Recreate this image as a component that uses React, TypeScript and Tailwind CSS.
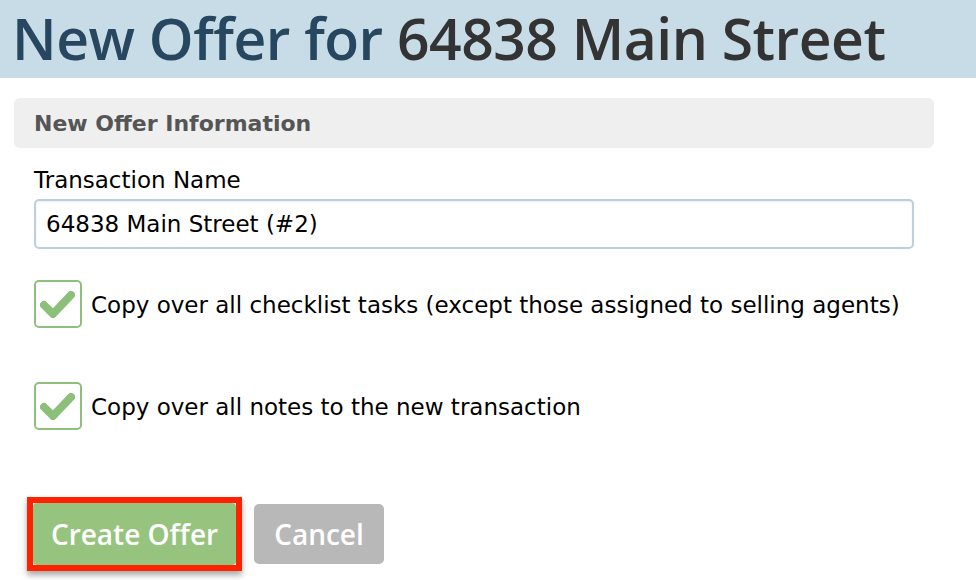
function Check() {
  return (
    <div className="w-[48px] h-[48px] rounded-[5px] border-2 border-[#8fbf7c] bg-white flex items-center justify-center shrink-0">
      <svg width="40" height="34" viewBox="0 0 40 34">
        <path d="M6 18 L15 27 L33 8" fill="none" stroke="#8cc07a" strokeWidth="8" strokeLinecap="round" strokeLinejoin="round" style={{ filter: "blur(0.7px)" }} />
      </svg>
    </div>
  );
}

export default function App() {
  const body = { fontFamily: '"DejaVu Sans", "Lucida Grande", sans-serif' };
  const open = { fontFamily: '"Open Sans", sans-serif' };
  return (
    <div className="w-[976px] h-[580px] bg-white overflow-hidden" style={body}>
      <header className="h-[78px] bg-[#c8dce7] pl-[12px] flex items-center">
        <h1 className="text-[57px] font-semibold leading-none tracking-[-0.5px] pb-[2px]" style={open}>
          <span className="text-[#27465f]">New Offer for </span>
          <span className="text-[#333333]">64838 Main Street</span>
        </h1>
      </header>

      <section className="pl-[14px] pr-[42px] pt-[20px]">
        <div className="h-[50px] bg-[#efefef] rounded-[6px] flex items-center pl-[20px]">
          <h2 className="text-[22px] font-bold text-[#555555]">New Offer Information</h2>
        </div>

        <div className="pl-[20px] pr-[20px]">
          <label className="block mt-[17px] text-[23px] text-black leading-[30px]">Transaction Name</label>
          <div className="mt-[4px] h-[50px] border-2 border-[#bccfdd] rounded-[5px] flex items-center pl-[10px] text-[23px] text-black shadow-[inset_0_1px_2px_rgba(0,0,0,0.08)]">
            64838 Main Street (#2)
          </div>

          <div className="mt-[31px] flex items-center gap-[9px]">
            <Check />
            <span className="text-[23px] text-black pt-[2px]">Copy over all checklist tasks (except those assigned to selling agents)</span>
          </div>

          <div className="mt-[54px] flex items-center gap-[9px]">
            <Check />
            <span className="text-[23px] text-black pt-[2px]">Copy over all notes to the new transaction</span>
          </div>

          <div className="mt-[67px] flex items-center gap-[12px] ml-[-7px]">
            <div className="border-[6px] border-[#ff2200] shadow-[0_4px_6px_rgba(0,0,0,0.35)]">
              <button className="w-[203px] h-[62px] bg-[#96c47e] rounded-[4px] text-white text-[28px] font-semibold" style={open}>
                Create Offer
              </button>
            </div>
            <button className="w-[130px] h-[60px] bg-[#b8b8b8] rounded-[5px] text-white text-[28px] font-semibold" style={open}>
              Cancel
            </button>
          </div>
        </div>
      </section>
    </div>
  );
}
